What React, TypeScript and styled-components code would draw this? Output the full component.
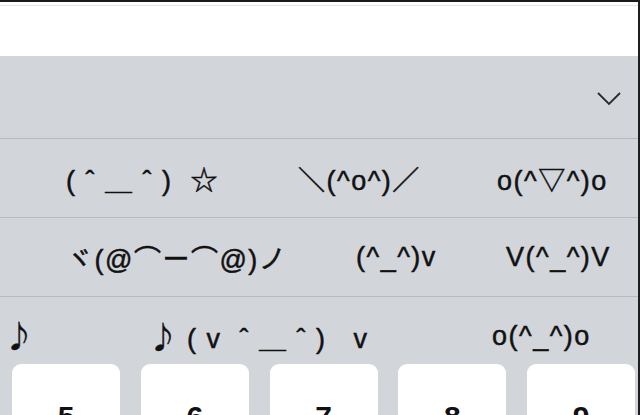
import styled, { createGlobalStyle } from 'styled-components';

const GlobalStyle = createGlobalStyle`
  html, body {
    margin: 0;
    padding: 0;
    background: #ffffff;
  }
  body {
    font-family: "Liberation Sans", "Noto Sans CJK JP", sans-serif;
  }
`;

type RowData = { pad: number; cols: string; items: React.ReactNode[] };

const rows: RowData[] = [
  { pad: 66, cols: '232px 199px auto', items: ['( ˆ ＿ ˆ )  ☆', '＼(^o^)／', 'o(^▽^)o'] },
  { pad: 66, cols: '290px 150px auto', items: ['ヾ(@⌒ー⌒@)ノ', '(^_^)v', 'V(^_^)V'] },
  {
    pad: 4,
    cols: '144px 344px auto',
    items: [
      <Note key="n">♪</Note>,
      <span key="m">
        <Note>♪</Note>
        {' ( v  ˆ ＿ ˆ )   v'}
      </span>,
      'o(^_^)o',
    ],
  },
];

const keys = ['5', '6', '7', '8', '9'];

export default function App() {
  return (
    <Screen>
      <GlobalStyle />
      <InputBar />
      <Panel>
        <Header>
          <svg width="26" height="16" viewBox="0 0 26 16">
            <path d="M2 2 L13 13 L24 2" fill="none" stroke="#2b2b2b" strokeWidth="1.8" />
          </svg>
        </Header>
        {rows.map((r, i) => (
          <EmoRow key={i} $pad={r.pad} $cols={r.cols} $last={i === rows.length - 1}>
            {r.items.map((t, j) => (
              <Emo key={j}>{t}</Emo>
            ))}
          </EmoRow>
        ))}
        <KeyRow>
          {keys.map((k) => (
            <Key key={k}>{k}</Key>
          ))}
        </KeyRow>
      </Panel>
    </Screen>
  );
}

function Note({ children }: { children: React.ReactNode }) {
  return <NoteGlyph>{children}</NoteGlyph>;
}

const Screen = styled.div`
  width: 640px;
  height: 415px;
  overflow: hidden;
  display: flex;
  flex-direction: column;
  background: #d2d5da;
  border-right: 2px solid #1e1e1e;
  box-sizing: border-box;
`;

const InputBar = styled.div`
  height: 56px;
  flex: none;
  background: #ffffff;
  border-top: 2px solid #1a1a1a;
  box-sizing: border-box;
  box-shadow: inset 0 3px 0 #ffffff, inset 0 4px 0 #e4e4e4;
`;

const Panel = styled.div`
  flex: 1;
  display: flex;
  flex-direction: column;
  background: #d2d5da;
`;

const Header = styled.div`
  height: 82px;
  flex: none;
  display: flex;
  align-items: center;
  justify-content: flex-end;
  padding-right: 16px;
  padding-top: 4px;
  box-sizing: border-box;
`;

const EmoRow = styled.div<{ $pad: number; $cols: string; $last: boolean }>`
  height: ${(p) => (p.$last ? 66 : 79)}px;
  flex: none;
  box-sizing: border-box;
  border-top: 1px solid #b7bbc1;
  display: grid;
  grid-template-columns: ${(p) => p.$cols};
  align-items: center;
  padding-left: ${(p) => p.$pad}px;
  padding-top: ${(p) => (p.$last ? 13 : 0)}px;
`;

const Emo = styled.div`
  font-size: 27px;
  font-weight: 400;
  letter-spacing: 1.5px;
  color: #111111;
  white-space: pre;
  -webkit-text-stroke: 0.5px #111111;
`;

const NoteGlyph = styled.span`
  font-family: "Noto Sans CJK JP", sans-serif;
  font-size: 30px;
  line-height: 1;
  letter-spacing: 0;
`;

const KeyRow = styled.div`
  display: grid;
  grid-template-columns: repeat(5, 108px);
  column-gap: 20.75px;
  padding-left: 12px;
  padding-top: 2px;
`;

const Key = styled.div`
  height: 90px;
  background: #ffffff;
  border-radius: 9px;
  display: flex;
  justify-content: center;
  padding-top: 36px;
  box-sizing: border-box;
  font-size: 30px;
  font-weight: 700;
  color: #111111;
`;
